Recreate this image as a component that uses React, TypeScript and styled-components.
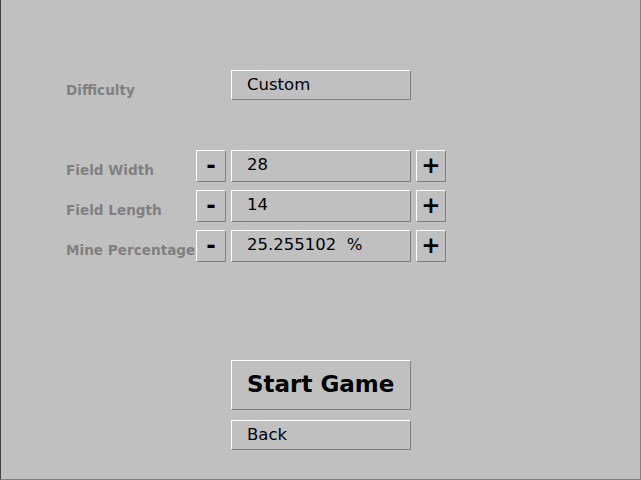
import React from "react";
import styled, { createGlobalStyle } from "styled-components";

const Global = createGlobalStyle`
  html, body { margin: 0; padding: 0; background: #c0c0c0; }
  * { box-sizing: border-box; }
`;

const Screen = styled.div`
  width: 641px;
  height: 480px;
  background: #c0c0c0;
  border-left: 1px solid #404040;
  border-right: 1px solid #808080;
  border-bottom: 1px solid #808080;
  padding: 70px 0 0 65px;
  display: flex;
  flex-direction: column;
  font-family: "DejaVu Sans", "Liberation Sans", sans-serif;
`;

const Row = styled.div<{ $mt?: number }>`
  display: grid;
  grid-template-columns: 125px 30px 180px 30px;
  column-gap: 5px;
  height: 30px;
  margin-top: ${(p) => p.$mt ?? 0}px;
`;

const Label = styled.div`
  grid-column: 1;
  color: #808080;
  font-weight: bold;
  font-size: 13.6px;
  line-height: 16px;
  padding-top: 12px;
  white-space: nowrap;
`;

const Raised = styled.div`
  background: #c0c0c0;
  border-top: 1px solid #ffffff;
  border-left: 1px solid #ffffff;
  border-bottom: 1px solid #808080;
  border-right: 1px solid #808080;
  color: #000;
`;

const ValueBox = styled(Raised)`
  grid-column: 3;
  font-size: 16.5px;
  line-height: 28px;
  padding-left: 15px;
  white-space: pre;
`;

const StepButton = styled(Raised)<{ $col: number }>`
  grid-column: ${(p) => p.$col};
  display: flex;
  align-items: center;
  justify-content: center;
  font-weight: bold;
  font-size: 23px;
  line-height: 28px;
  padding-bottom: 2px;
`;

const Actions = styled.div`
  margin-top: 100px;
  margin-left: 165px;
  display: flex;
  flex-direction: column;
  gap: 10px;
  width: 180px;
`;

const ActionButton = styled(Raised)<{ $big?: boolean }>`
  height: ${(p) => (p.$big ? 50 : 30)}px;
  line-height: ${(p) => (p.$big ? 47 : 28)}px;
  font-size: ${(p) => (p.$big ? 23 : 16.5)}px;
  font-weight: ${(p) => (p.$big ? "bold" : "normal")};
  padding-left: 15px;
  white-space: nowrap;
`;

const Stack = styled.div`
  display: flex;
  flex-direction: column;
  gap: 10px;
  margin-top: 50px;
`;

const fields = [
  { label: "Field Width", value: "28" },
  { label: "Field Length", value: "14" },
  { label: "Mine Percentage", value: "25.255102  %" },
];

export default function App() {
  return (
    <>
      <Global />
      <Screen>
        <Row>
          <Label>Difficulty</Label>
          <ValueBox>Custom</ValueBox>
        </Row>
        <Stack>
          {fields.map((f) => (
            <Row key={f.label}>
              <Label>{f.label}</Label>
              <StepButton $col={2}>-</StepButton>
              <ValueBox>{f.value}</ValueBox>
              <StepButton $col={4}>+</StepButton>
            </Row>
          ))}
        </Stack>
        <Actions>
          <ActionButton $big>Start Game</ActionButton>
          <ActionButton>Back</ActionButton>
        </Actions>
      </Screen>
    </>
  );
}
